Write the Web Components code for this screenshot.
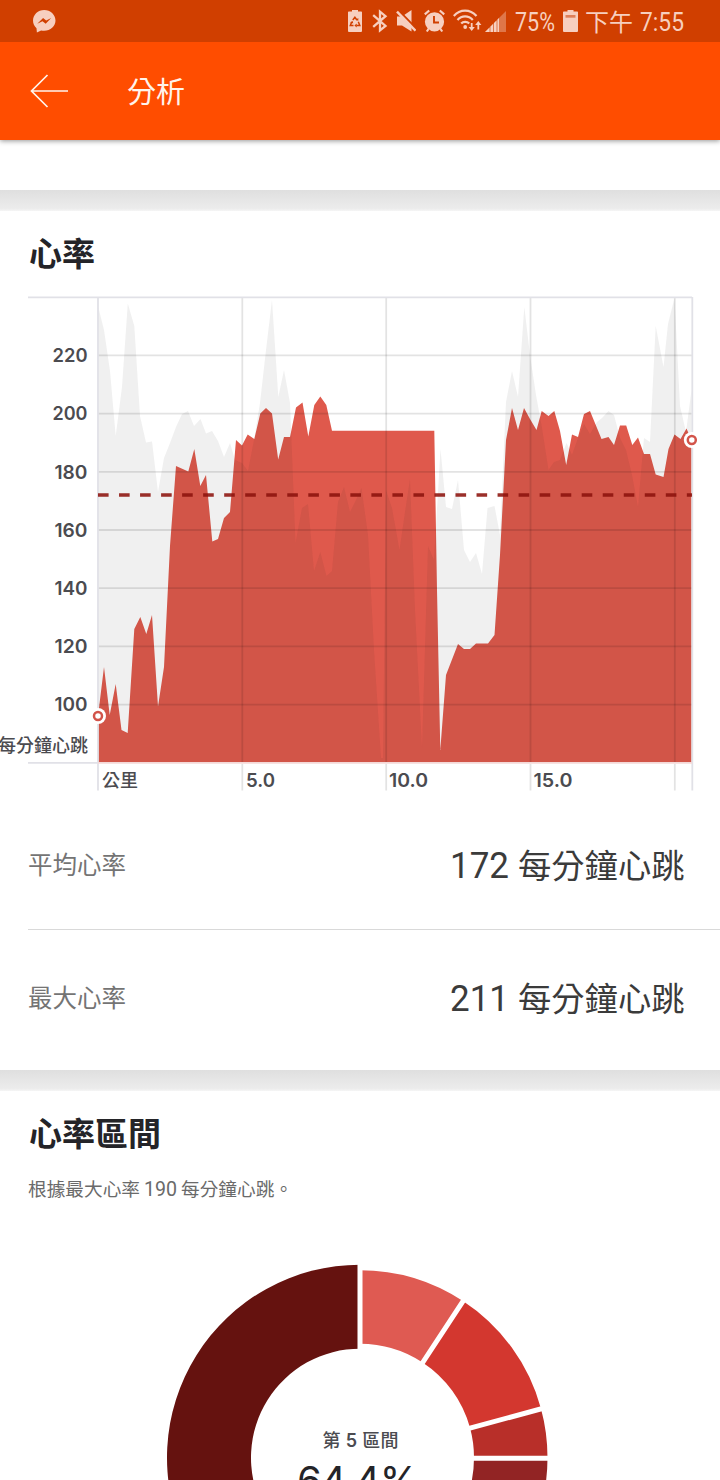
<!DOCTYPE html>
<html lang="zh-Hant">
<head>
<meta charset="utf-8">
<title>分析</title>
<style>
  html, body { margin: 0; background: #fff; }
  body { width: 720px; height: 1480px; overflow: hidden; font-family: Roboto, "Noto Sans CJK TC", sans-serif; }
</style>
</head>
<body>
<analysis-page></analysis-page>
<script>
const FONT = 'Roboto, "Noto Sans CJK TC", sans-serif';
const AXIS = 'Inter, "Noto Sans CJK TC", sans-serif';

const define = (name, html, setup) => {
  const template = document.createElement('template');
  template.innerHTML = html;
  customElements.define(name, class extends HTMLElement {
    connectedCallback() {
      if (this.shadowRoot) return;
      this.attachShadow({ mode: 'open' }).append(template.content.cloneNode(true));
      if (setup) setup.call(this, this.shadowRoot);
    }
  });
};

/* A single run of text set to an exact advance width. */
define('fit-text', '<style>:host{display:block;flex:none}svg{display:block;overflow:visible}text{fill:currentColor}</style><svg><text></text></svg>', function (root) {
  const get = (n, d) => this.getAttribute(n) || d;
  const svg = root.querySelector('svg'), text = root.querySelector('text');
  const w = get('w'), h = get('h', '30');
  svg.setAttribute('width', w); svg.setAttribute('height', h);
  text.setAttribute('y', get('base', '24'));
  text.setAttribute('textLength', w);
  text.setAttribute('lengthAdjust', 'spacingAndGlyphs');
  text.style.font = `${get('weight', '400')} ${get('size', '24')}px ${FONT}`;
  text.textContent = get('text', '');
});

define('status-bar', `
<style>
  :host { display: flex; box-sizing: border-box; height: 42px; background: #d03f00; color: #f7cfbf; padding-left: 33px; position: relative; z-index: 1; }
  svg { display: block; flex: none; margin-top: 9px; fill: currentColor; }
  .spacer { width: 292px; flex: none; }
</style>
<svg width="23" height="24" viewBox="0 0 23 24"><path fill-rule="evenodd" d="M11.2 1C5 1 0 5.7 0 11.6c0 3.1 1.300 5.700 3.500 7.600L3.900 23.500l4.200-2.100c1 .3 2 .4 3.100.4 6.200 0 11.300-4.500 11.300-10.300S17.400 1 11.200 1zM4.300 14.800l5.800-5.700 3.100 2.500 5-2.700-5.500 5.900-3.200-2.600z"/></svg>
<span class="spacer"></span>
<svg width="14" height="24" viewBox="0 0 14 24"><path fill-rule="evenodd" d="M4 1h6v1.500h3.200q.8 0 .8.800V22q0 1-1 1H1q-1 0-1-1V3.300q0-.8.800-.8H4z"/><g fill="none" stroke="#d03f00" stroke-width="1.500"><path d="M4.800 11 6.900 8.200l2 2.800M3.700 13 2.300 16.500h3.200M10.300 12.800l1.500 3.700H8.500"/></g><path fill="#d03f00" d="m7.600 11 2.700.8V9zM2.200 13.200l2.500-1.200.5 2.500zM8.700 14.600v3.800l-2.300-1.900z"/></svg>
<svg style="margin-left:10px" width="16" height="24" viewBox="0 0 16 24" ><path fill="none" stroke="currentColor" stroke-width="2.300" d="m1.200 6.200 12.300 10.700L8 21.300V2.700l5.500 4.500L1.200 17.800"/></svg>
<svg style="margin-left:8px" width="20" height="24" viewBox="0 0 20 24"><path d="M1 7.500h5l9.500-6.500v21.500L6 16.500H1z"/><path stroke="#d03f00" stroke-width="2" d="m2 .7 18 18.500"/><path stroke="currentColor" stroke-width="2.400" d="m1 2.700 18.500 19"/></svg>
<svg style="margin-left:8px" width="21" height="24" viewBox="0 0 21 24"><circle cx="10.500" cy="12.800" r="9.600"/><path fill="none" stroke="currentColor" stroke-width="2.200" d="M.8 5.400 5.200 1.500M15.800 1.500l4.400 3.900M4.500 20l-1.700 2.500M16.500 20l1.700 2.500"/><path fill="none" stroke="#d03f00" stroke-width="1.900" d="M10 7v6.500h5"/></svg>
<svg style="margin-left:8px" width="29" height="24" viewBox="0 0 29 24"><g fill="none" stroke="currentColor" stroke-width="2.200"><path d="M.8 7C7-.2 17-.2 23.500 7M4.500 11c4.200-4.800 11-4.800 15.300 0M8.200 14.500c2-2.300 6-2.300 8 0"/></g><circle cx="12.200" cy="18" r="1.900"/><path d="M17.800 14h1.800v4h2.200l-3.100 4-3.100-4h2.200zM24.400 20.500h1.800v-4.500h2.200l-3.100-4-3.100 4h2.200z"/></svg>
<svg style="margin-left:3px" width="21" height="24" viewBox="0 0 21 24"><path opacity=".38" d="M0 23 21 2v21z"/><path d="M0 23l4.500-4.500V23zM5.500 23v-5.500L8 15v8zM9 23v-9l2.500-2.500V23zM12.500 23V10.500L14 9v14z"/></svg>
<fit-text style="margin-left:9px" w="40" h="42" base="31" size="25" text="75%"></fit-text>
<svg style="margin-left:8px" width="15" height="24" viewBox="0 0 15 24"><path d="M4.500 1h6v1.500h3.700q.8 0 .8.800V22q0 1-1 1H1q-1 0-1-1V3.300q0-.8.800-.8h3.700z"/><path fill="#de8059" d="M2.500 6h10v2.700h-10z"/></svg>
<fit-text style="margin-left:7px" w="48" h="42" base="31" size="24" weight="400" text="下午"></fit-text>
<fit-text style="margin-left:7px" w="44" h="42" base="31" size="25" text="7:55"></fit-text>
`);

define('app-bar', `
<style>
  :host { display: flex; box-sizing: border-box; height: 98px; background: #ff4d00; color: #fff4ec; padding-left: 30px; box-shadow: 0 1px 5px rgba(0,0,0,.42); position: relative; }
  svg { display: block; margin: 31px 58px 0 0; }
</style>
<svg width="39" height="36" viewBox="0 0 39 36" fill="none" stroke="currentColor" stroke-width="1.700"><path d="M38 18H1.500M17.500 2 1.500 18l16 16"/></svg>
<fit-text w="58" h="98" base="61" size="29" weight="400" text="分析"></fit-text>
`);

define('section-gap', `<style>:host{display:block;height:21px;background:linear-gradient(#dfdfdf,#ececec 88%,#f5f5f5)}</style>`);

define('section-title', `<style>:host{display:block;color:#242428;padding-left:29px}</style><slot></slot>`);

define('stat-row', `
<style>
  :host { display: flex; box-sizing: border-box; margin-left: 28px; padding-right: 36px; }
  .label { color: #747474; } .num, .unit { color: #3b3b3b; }
  .num { margin-left: auto; margin-right: 9px; }
</style>
<fit-text class="label" w="98" h="129" base="74" size="24.500" weight="400"></fit-text>
<fit-text class="num" w="59" h="129" base="78" size="36"></fit-text>
<fit-text class="unit" w="166.500" h="129" base="77.500" size="33.300" weight="400" text="每分鐘心跳"></fit-text>
`, function (root) {
  for (const key of ['label', 'num']) {
    const el = root.querySelector('.' + key), fresh = el.cloneNode();
    fresh.setAttribute('text', this.getAttribute(key));
    el.replaceWith(fresh);
  }
});

const heart = '98,716 104,667 109.7,715 115.7,684 121.5,730 127.7,733 134.3,629 140.3,617 146.3,634 152,615 158,706.5 164,667 170,546 176,466 188.3,471.5 194.3,449 200.3,486 206,475 212.3,541.5 218,539 224,518 230,512 236,440 242,445.5 247.7,434.5 254.3,439 260.3,413.5 266,408 272,413.5 278.2,459.5 284,437 290,437 296,407.5 302.5,402.5 308.3,436.5 314.3,405 320.3,396.5 326.3,405 332,430.8 434.3,430.8 437,590 440.3,750 446,675 458,644 464,649 470,649 476,643.5 488,643.5 494.5,635 500,555 506,440 512,408 518,430 524,408 530,419 536.5,430 541.7,411 548.5,416 554.3,411 560,431 566.2,465 572,434.5 578,437 584,414 590,411 601.5,439 608.5,437 614,445 620,425.5 626.2,425.5 632.3,445 638,437.5 644,454 650,454 655.7,474.5 663.5,477 668.5,449 674.5,434.5 680.5,439 686.5,428.5 691.500,440';
const elevation = '98,306 104,330 110,371 115.7,436 122,387 127.8,303.5 134.3,326 140,416 146,442.5 152,441.5 158,492 164,458 170,443 176,427 182,414 188,411 194,426 200.5,419 206,433.5 212,431 218,441 224,457 230,443 235,460 242,463 248,471 254,440 260,403 266,350 272,300 278.3,397 284,370 290,403 295.5,543 302,508 308,504 314,571 320.3,552 326.5,576 332,571 338,502 344,487 350,512 356,500 361.5,488 368,535 374,650 381,758 383,758 386,490 392,508 399.5,550 405,512 410,479 415,610 422,748 428,546 434,560 440.5,449 446,507 452,509 458,480 464,550 470,562 476,553 482,574 487.5,508 494.5,506 500,535 506,402 512,371 518,397 524.3,307 530,355 536,395 542,428 548.5,470 554,462 560,460 566.5,443 572,455 578,438 584,424 590,434 597,422 602,418 608.5,411 614,415 620,438 626,450 632,475 638,507 644,438 650,442 655.7,326 663.5,367 668,324 674.5,298 680,406 686,432 691.500,390';

define('heart-chart', `
<style>:host{display:block}svg{display:block}text{fill:#4b4b50;font:600 19px ${AXIS}}.cjk{font-size:18px;font-weight:500}</style>
<svg width="720" height="510" viewBox="0 290 720 510">
  <polygon fill="#df594c" points="98,762 ${heart} 691.500,762"/>
  <polygon fill="#202020" fill-opacity=".068" points="98,762 ${elevation} 691.500,762"/>
  <g class="grid" stroke="#000" stroke-opacity=".11" stroke-width="1.800"></g>
  <g stroke="#e1e1e7" stroke-width="1.800"><path d="M28 297.300H692M28 762.800H98M98 297V790.500M692.300 297V790.500"/><path stroke="#f4d8d7" d="M98 762.800H692"/></g>
  <path d="M98 495H692" stroke="#8c120d" stroke-opacity=".88" stroke-width="3.600" stroke-dasharray="10.600 10.430"/>
  <g fill="#fff"><circle cx="98" cy="716" r="8"/><circle cx="691.800" cy="440" r="8"/></g>
  <g fill="none" stroke="#d2544a" stroke-width="2.500"><circle cx="98" cy="716" r="4"/><circle cx="691.800" cy="440" r="4"/></g>
  <g class="labels"></g>
</svg>`, root => {
  const SVG = 'http://www.w3.org/2000/svg';
  const grid = root.querySelector('.grid'), labels = root.querySelector('.labels');
  const line = d => { const p = document.createElementNS(SVG, 'path'); p.setAttribute('d', d); grid.append(p); };
  const label = (text, x, y, w, cls) => {
    const t = document.createElementNS(SVG, 'text');
    t.setAttribute('x', x); t.setAttribute('y', y); t.setAttribute('textLength', w);
    t.setAttribute('lengthAdjust', 'spacingAndGlyphs');
    if (cls) t.setAttribute('class', cls);
    t.textContent = text; labels.append(t);
  };
  [220, 200, 180, 160, 140, 120, 100].forEach((v, i) => {
    const y = 355.400 + i * 58.200, w = v >= 200 ? 35 : 33;
    line(`M98 ${y}H692`);
    label(v, 87.500 - w, y + 6.800, w);
  });
  [242.300, 386.200, 530.500, 674.800].forEach(x => line(`M${x} 297V762M${x} 764V790.500`));
  label('每分鐘心跳', -2, 751.500, 90, 'cjk');
  label('公里', 102, 787, 36, 'cjk');
  label('5.0', 246, 787, 29);
  label('10.0', 389, 787, 39);
  label('15.0', 533.500, 787, 39);
});

define('zone-donut', `
<style>:host{display:block}svg{display:block}.zone{fill:#4b4b50;font:500 18px ${AXIS}}.zone tspan{font-weight:600}.pct{fill:#242428;font:400 40px ${AXIS}}</style>
<svg width="720" height="260" viewBox="0 1220 720 260"><g class="arcs"></g>
  <path stroke="#fff" stroke-width="5" d="M360 1458V1250M360 1458 474.200 1284.200M360 1458 560.700 1403.500M360 1458.200H565"/>
  <text class="zone" x="322.500" y="1446.500" textLength="76">第 <tspan>5</tspan> 區間</text>
  <text class="pct" x="297" y="1495" textLength="122">64.4%</text>
</svg>`, root => {
  const point = (r, a) => `${360 + r * Math.sin(a * Math.PI / 180)} ${1457.700 - r * Math.cos(a * Math.PI / 180)}`;
  const arcs = [[0, 33.300, 187.500, 114, '#df5a52'], [33.300, 74.800, 187.500, 114, '#d3372f'], [74.800, 90, 187.500, 114, '#b82f29'], [90, 128, 187.500, 114, '#922424'], [128, 360, 193, 109, '#65120f']];
  root.querySelector('.arcs').innerHTML = arcs.map(([a, b, R, r, c]) => {
    const big = b - a > 180 ? 1 : 0;
    return `<path fill="${c}" d="M${point(R, a)}A${R} ${R} 0 ${big} 1 ${point(R, b)}L${point(r, b)}A${r} ${r} 0 ${big} 0 ${point(r, a)}z"/>`;
  }).join('');
});

define('analysis-page', `
<style>
  :host { display: flex; flex-direction: column; width: 720px; height: 1480px; overflow: hidden; background: #fff; }
  :host > * { flex: none; }
  .previous { height: 50px; }
  .stats { height: 270px; }
  .first { height: 130px; border-bottom: 1px solid #d9d9d9; }
  .second { height: 140px; padding-top: 3px; }
  .note { display: flex; color: #6a6a6a; padding-left: 28px; height: 50px; }
  .note fit-text + fit-text { margin-left: 4px; }
</style>
<status-bar></status-bar>
<app-bar></app-bar>
<div class="previous"></div>
<section-gap></section-gap>
<section-title><fit-text w="66" h="79" base="55" size="33" weight="700" text="心率"></fit-text></section-title>
<heart-chart></heart-chart>
<div class="stats">
  <stat-row class="first" label="平均心率" num="172"></stat-row>
  <stat-row class="second" label="最大心率" num="211"></stat-row>
</div>
<section-gap></section-gap>
<section-title><fit-text w="132" h="79" base="55" size="33" weight="700" text="心率區間"></fit-text></section-title>
<div class="note">
  <fit-text w="112" h="50" base="26" size="18.600" text="根據最大心率"></fit-text>
  <fit-text w="33" h="50" base="26" size="20" text="190"></fit-text>
  <fit-text w="112" h="50" base="26" size="18.600" text="每分鐘心跳。"></fit-text>
</div>
<zone-donut></zone-donut>
`);
</script>
</body>
</html>
